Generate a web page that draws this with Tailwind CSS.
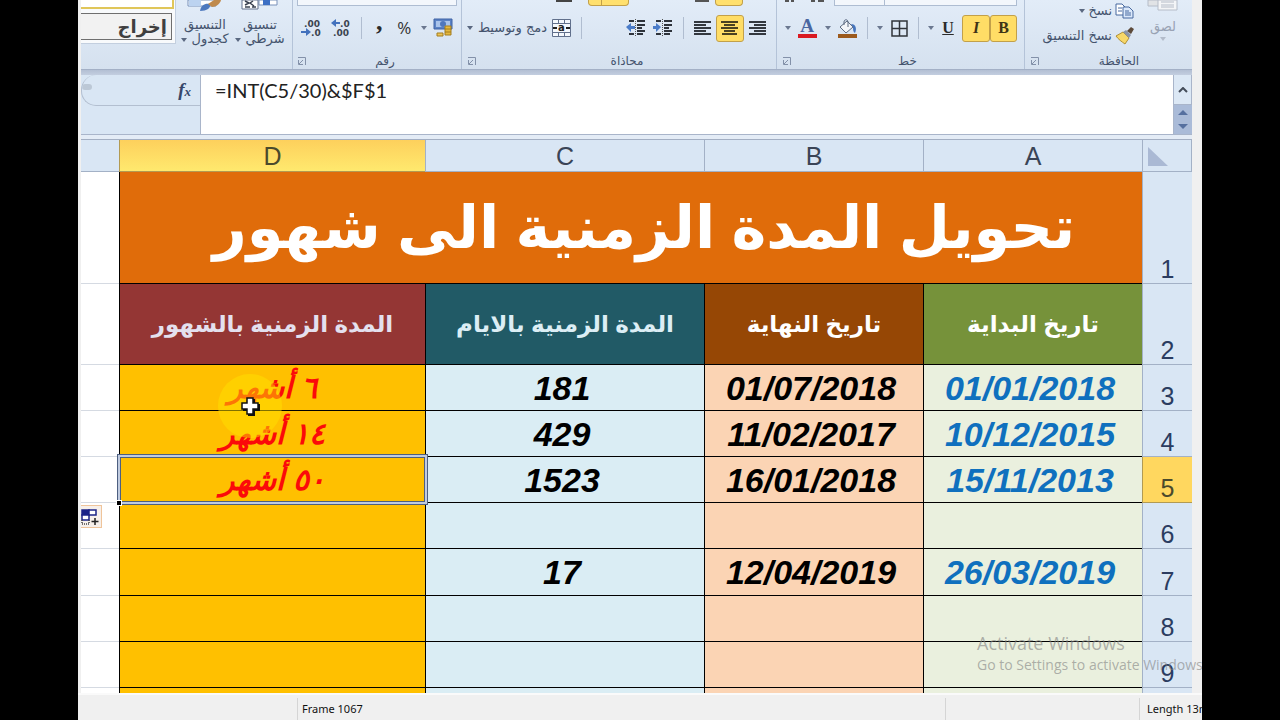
<!DOCTYPE html>
<html lang="ar">
  <head>
    <title>تحويل المدة الزمنية الى شهور</title>

    <meta charset="utf-8" />
    <meta name="viewport" content="width=device-width, initial-scale=1" />

    <script src="https://cdn.jsdelivr.net/npm/@tailwindcss/browser@4"></script>
  </head>

  <body class="bg-black">
    <div class="relative mx-[78px] flex h-screen flex-col overflow-hidden bg-[#f0f0f0] font-['Liberation_Sans','DejaVu_Sans',sans-serif]">
      <div class="ml-[3px] mr-[10px] flex min-h-0 flex-1 flex-col overflow-hidden bg-white">
        <!-- Ribbon -->
        <header class="grid h-[70px] shrink-0 grid-cols-[212fr_169fr_315fr_248fr_167fr] border-b border-[#a3b0c6] bg-linear-to-b from-[#e2ecf8] to-[#d5e1ef] font-['DejaVu_Sans',sans-serif] text-[13px] text-[#44536d]">
          <!-- Styles -->
          <section class="flex min-w-0 overflow-hidden border-r border-[#b4c3d8]" aria-label="أنماط">
            <div class="flex h-[44px] w-[95px] shrink-0 flex-col justify-between border-r border-b border-[#c3cfdf] bg-[#f8fafc] pb-[3px]">
              <button class="h-[9px] w-[93px] border-2 border-t-0 border-l-0 border-[#e0c659] bg-white" aria-label="نمط"></button>
              <button class="h-[27px] w-[91px] border border-l-0 border-[#6f6f6f] bg-[#f2f2f2] pr-1 text-right text-[18px]/[20px] font-bold text-[#3f3f3f]" dir="rtl">إخراج</button>
            </div>
            <button class="flex h-[50px] w-[58px] shrink-0 flex-col items-center leading-[14px]">
              <svg width="36" height="12" viewBox="0 0 36 12" class="mb-[6px] shrink-0">
                <path d="M1 0h28v6H1z" fill="#fff" stroke="#7891ba" />
                <path d="M2 0h12v6H2z" fill="#bcd3f0" />
                <path d="M13 11c1-6 5-8 10-7 1 4-3 7-10 7z" fill="#4d79be" />
                <path d="M21 4l6-4h7c-1 4-5 7-9 7z" fill="#c08a4c" />
              </svg>
              <span dir="rtl">التنسيق</span>
              <span dir="rtl" class="whitespace-nowrap">كجدول <i class="inline-block border-x-[3px] border-t-4 border-x-transparent border-t-[#5a6880] align-middle"></i></span>
            </button>
            <button class="flex h-[50px] w-[52px] shrink-0 flex-col items-center leading-[14px]">
              <svg width="38" height="12" viewBox="0 0 38 12" class="mb-[6px] shrink-0">
                <path d="M18 0h18v5H18z" fill="#fff" stroke="#7891ba" />
                <path d="M22 0h7v5h-7z" fill="#3c6fc4" />
                <path d="M1 0h16v9H1z" fill="#fff" stroke="#65738e" />
                <path d="M4 1l4 2-4 2M12 1l-3 2 4 3M4 7h5M11 7h4" fill="none" stroke="#3a4150" stroke-width="1.5" />
              </svg>
              <span dir="rtl">تنسيق</span>
              <span dir="rtl" class="whitespace-nowrap">شرطي <i class="inline-block border-x-[3px] border-t-4 border-x-transparent border-t-[#5a6880] align-middle"></i></span>
            </button>
          </section>

          <!-- Number -->
          <section class="flex flex-col border-r border-[#b4c3d8] px-1" aria-label="رقم">
            <div class="h-[6px] border border-t-0 border-[#aebdd2] bg-[#f3f7fc]"></div>
            <div class="mt-[7px] flex h-[30px] items-center justify-between px-1">
              <button aria-label="إنقاص المنازل العشرية">
                <svg width="20" height="18" viewBox="0 0 20 18" class="text-[9px] font-bold" fill="#3b4350">
                  <text x="3" y="8">.00</text>
                  <text x="10" y="17">.0</text>
                  <path d="M0 12h5v-3l5 4-5 4v-3H0z" fill="#4371bd" />
                </svg>
              </button>
              <button aria-label="زيادة المنازل العشرية">
                <svg width="20" height="18" viewBox="0 0 20 18" class="text-[9px] font-bold" fill="#3b4350">
                  <text x="9" y="8">.0</text>
                  <text x="2" y="17">.00</text>
                  <path d="M9 3H5V0L0 4l5 4V5h4z" fill="#4371bd" />
                </svg>
              </button>
              <span class="h-[22px] w-px bg-[#b0bdd0]"></span>
              <button class="w-4 pb-3 font-['Liberation_Serif',serif] text-[26px]/[18px] font-bold text-[#2b2b2b]" aria-label="نمط الفاصلة">,</button>
              <button class="font-['Open_Sans',sans-serif] text-[17px]/[20px] text-[#333]" aria-label="نمط النسبة المئوية">%</button>
              <div class="flex items-center gap-[6px]">
                <i class="border-x-[3px] border-t-4 border-x-transparent border-t-[#6b7890]"></i>
                <button aria-label="تنسيق أرقام المحاسبة">
                  <svg width="20" height="20" viewBox="0 0 20 20">
                    <path d="M1 1h18v10H1z" fill="#5b82c4" stroke="#3e62a5" />
                    <path d="M3 3h14v6H3z" fill="#a9c3ea" />
                    <ellipse cx="10" cy="6" rx="3" ry="3" fill="#4f77bd" />
                    <path d="M12 8h6v9h-6z" fill="#e6b93d" stroke="#a37d1e" />
                    <path d="M12 11h6M12 14h6M4 15h6v3H4z" fill="#edc556" stroke="#a37d1e" />
                  </svg>
                </button>
              </div>
            </div>
            <div class="mt-auto flex h-[17px] items-center text-[12px]">
              <button class="w-4" aria-label="إعدادات الرقم">
                <svg width="10" height="10" viewBox="0 0 10 10" fill="none" stroke="#8391a9"><path d="M1 1.500h7.500V9M6 4L2 8M1.500 4v4.500H6" /></svg>
              </button>
              <span class="flex-1 text-center" dir="rtl">رقم</span>
            </div>
          </section>

          <!-- Alignment -->
          <section class="flex flex-col border-r border-[#b4c3d8] px-[5px]" aria-label="محاذاة">
            <div class="flex h-[6px] items-start justify-end">
              <svg width="16" height="3" class="mr-[16px]"><path d="M0 1h16" stroke="#444" stroke-width="2" /></svg>
              <div class="mr-[66px] flex"><span class="h-[6px] w-[14px] rounded-bl-sm border border-t-0 border-[#c2a04a] bg-[#ffe06e]"></span><span class="h-[6px] w-[27px] rounded-br-sm border border-t-0 border-l-0 border-[#c2a04a] bg-[#ffe06e]"></span></div>
              <svg width="15" height="3" class="mr-[5px]"><path d="M0 1h14" stroke="#555" stroke-width="2" /></svg>
              <span class="mr-[28px] h-[6px] w-[28px] rounded-b-sm border border-t-0 border-[#c2a04a] bg-[#ffe06e]"></span>
            </div>
            <div class="mt-[7px] flex h-[30px] items-center justify-between pr-[5px]">
              <button class="flex items-center gap-[5px] whitespace-nowrap">
                <i class="border-x-[3px] border-t-4 border-x-transparent border-t-[#5a6880]"></i>
                <span dir="rtl">دمج وتوسيط</span>
                <svg width="19" height="18" viewBox="0 0 19 18">
                  <path d="M.5.5h18v17H.5z" fill="#f4f8fd" stroke="#61708c" />
                  <path d="M0 4.500h19M0 13.500h19M6.500 0v4M12.500 0v4M6.500 14v4M12.500 14v4" stroke="#61708c" />
                  <text x="6" y="12" class="text-[10px] font-bold" fill="#222">a</text>
                  <path d="M1 9h4M14 9h4" stroke="#222" stroke-width="2" />
                </svg>
              </button>
              <span class="h-[22px] w-px bg-[#b0bdd0]"></span>
              <span class="w-6"></span>
              <div class="flex gap-[7px]">
                <button aria-label="زيادة المسافة البادئة">
                  <svg width="20" height="18" viewBox="0 0 20 18" fill="none">
                    <path d="M3 2h5M11 2h8M11 6h8M11 9h5M11 12h8M3 15h5M11 15h6" stroke="#2e333b" stroke-width="2" />
                    <path d="M9.500 0v18" stroke="#555" stroke-dasharray="1 1" />
                    <path d="M0 8l5-4v3h4v3H5v3z" fill="#4a7cc9" />
                  </svg>
                </button>
                <button aria-label="إنقاص المسافة البادئة">
                  <svg width="20" height="18" viewBox="0 0 20 18" fill="none">
                    <path d="M3 2h5M11 2h8M11 6h8M11 9h5M11 12h8M3 15h5M11 15h6" stroke="#2e333b" stroke-width="2" />
                    <path d="M9.500 0v18" stroke="#555" stroke-dasharray="1 1" />
                    <path d="M8 8L3 4v3H0v3h3v3z" fill="#4a7cc9" />
                  </svg>
                </button>
              </div>
              <span class="h-[22px] w-px bg-[#b0bdd0]"></span>
              <div class="flex items-center gap-[5px]">
                <button aria-label="محاذاة النص إلى اليسار">
                  <svg width="17" height="15" viewBox="0 0 17 15" stroke="#33383f" stroke-width="2"><path d="M0 1h17M0 4h12M0 7h17M0 10h12M0 13h17" /></svg>
                </button>
                <button class="flex h-[27px] w-[28px] items-center justify-center rounded-[3px] border border-[#c2a04a] bg-[#ffdd66]" aria-label="توسيط">
                  <svg width="17" height="15" viewBox="0 0 17 15" stroke="#4a4122" stroke-width="2"><path d="M0 1h17M3 4h11M0 7h17M3 10h11M1 13h15" /></svg>
                </button>
                <button aria-label="محاذاة النص إلى اليمين">
                  <svg width="17" height="15" viewBox="0 0 17 15" stroke="#33383f" stroke-width="2"><path d="M0 1h17M5 4h12M0 7h17M5 10h12M0 13h17" /></svg>
                </button>
              </div>
            </div>
            <div class="mt-auto flex h-[17px] items-center text-[12px]">
              <button class="w-4" aria-label="إعدادات المحاذاة">
                <svg width="10" height="10" viewBox="0 0 10 10" fill="none" stroke="#8391a9"><path d="M1 1.500h7.500V9M6 4L2 8M1.500 4v4.500H6" /></svg>
              </button>
              <span class="flex-1 text-center" dir="rtl">محاذاة</span>
            </div>
          </section>

          <!-- Font -->
          <section class="flex flex-col border-r border-[#b4c3d8] pr-[7px] pl-[5px]" aria-label="خط">
            <div class="flex h-[6px] items-start justify-end">
              <svg width="42" height="3" class="mr-[9px]"><path d="M2 1h4M8 1h3M28 1h4M35 1h6" stroke="#555" stroke-width="2" /></svg>
              <div class="h-[6px] w-[51px] border border-t-0 border-[#aebdd2] bg-[#f3f7fc]"></div>
              <div class="h-[6px] w-[132px] border border-t-0 border-l-0 border-[#aebdd2] bg-[#f3f7fc]"></div>
            </div>
            <div class="mt-[7px] flex h-[30px] items-center justify-between pl-[3px]">
              <div class="flex items-center gap-[6px]">
                <i class="border-x-[3px] border-t-4 border-x-transparent border-t-[#6b7890]"></i>
                <button class="flex w-5 flex-col items-center" aria-label="لون الخط">
                  <span class="font-['Liberation_Serif',serif] text-[19px]/[14px] font-bold text-[#4a66a0]">A</span>
                  <span class="mt-px h-[4px] w-[19px] bg-[#da1a22]"></span>
                </button>
                <i class="ml-[2px] border-x-[3px] border-t-4 border-x-transparent border-t-[#6b7890]"></i>
                <button class="flex w-5 flex-col items-center" aria-label="لون التعبئة">
                  <svg width="20" height="15" viewBox="0 0 20 15">
                    <path d="M3 8l7-6 6 6-7 6z" fill="#f3f5f9" stroke="#5d6a80" />
                    <path d="M7 6V3c0-3 4-3 4 0v5" fill="none" stroke="#5d6a80" />
                    <path d="M14 5c5 0 6 5 4 9-2-1-2-4-2-6z" fill="#4675bd" />
                  </svg>
                  <span class="h-[4px] w-[19px] bg-[#9c5a1d]"></span>
                </button>
              </div>
              <span class="h-[22px] w-px bg-[#b0bdd0]"></span>
              <div class="flex items-center gap-2">
                <i class="border-x-[3px] border-t-4 border-x-transparent border-t-[#6b7890]"></i>
                <button aria-label="حدود">
                  <svg width="17" height="17" viewBox="0 0 17 17" fill="none" stroke="#30343a" stroke-width="1.500"><path d="M1 1h15v15H1zM8.500 1v15M1 8.500h15" /></svg>
                </button>
              </div>
              <span class="h-[22px] w-px bg-[#b0bdd0]"></span>
              <div class="flex items-center gap-[6px] font-['Liberation_Serif',serif] text-[16px] font-bold text-[#2b2b2b]">
                <i class="border-x-[3px] border-t-4 border-x-transparent border-t-[#6b7890]"></i>
                <button class="w-[16px] underline" aria-label="تسطير">U</button>
                <div class="flex text-[#3e3416]">
                  <button class="h-[27px] w-[28px] rounded-[3px] border border-[#c2a04a] bg-[#ffdd66] italic" aria-label="مائل">I</button>
                  <button class="h-[27px] w-[27px] rounded-[3px] border border-[#c2a04a] bg-[#ffdd66]" aria-label="غامق">B</button>
                </div>
              </div>
            </div>
            <div class="mt-auto flex h-[17px] items-center text-[12px]">
              <button class="w-4" aria-label="إعدادات الخط">
                <svg width="10" height="10" viewBox="0 0 10 10" fill="none" stroke="#8391a9"><path d="M1 1.500h7.500V9M6 4L2 8M1.500 4v4.500H6" /></svg>
              </button>
              <span class="flex-1 text-center" dir="rtl">خط</span>
            </div>
          </section>

          <!-- Clipboard -->
          <section class="flex flex-col pl-[5px]" aria-label="الحافظة">
            <div class="flex justify-end">
              <div class="flex flex-col items-end">
                <button class="flex h-[21px] items-center gap-[3px]">
                  <i class="border-x-[3px] border-t-4 border-x-transparent border-t-[#5a6880]"></i>
                  <span dir="rtl">نسخ</span>
                  <svg width="19" height="16" viewBox="0 0 19 16" fill="#fff" stroke="#47689f">
                    <path d="M1 1h6l3 3v8H1z" />
                    <path d="M3 5h4M3 8h4" />
                    <path d="M8 4h6l4 4v7H8z" fill="#dbe8fa" />
                    <path d="M10 8h4M10 10h6M10 12h6" />
                  </svg>
                </button>
                <button class="flex h-[30px] items-center gap-[3px] whitespace-nowrap">
                  <span dir="rtl">نسخ التنسيق</span>
                  <svg width="19" height="18" viewBox="0 0 19 18">
                    <path d="M1 9l7-4 6 6-4 6C7 15 3 12 1 9z" fill="#f7d768" stroke="#b08f35" />
                    <path d="M8 5l3-2 5 5-2 3z" fill="#8a94a8" />
                    <path d="M12 4l4-4 3 2-3 5z" fill="#5d4a3a" />
                  </svg>
                </button>
              </div>
              <button class="flex w-[58px] flex-col items-center text-[#98a2b3]">
                <svg width="32" height="12" viewBox="0 0 32 12" class="mb-[7px]" fill="#f4f5f7" stroke="#b5bcc8">
                  <path d="M1 0h15v6H1z" fill="#e1e3e6" />
                  <path d="M11 0h19v10H11z" />
                  <path d="M14 2h13M14 5h13M14 7h13" />
                </svg>
                <span dir="rtl" class="leading-[16px]">لصق</span>
                <i class="mt-[2px] border-x-[3px] border-t-4 border-x-transparent border-t-[#b3bccb]"></i>
              </button>
            </div>
            <div class="mt-auto flex h-[17px] items-center text-[12px]">
              <button class="w-4" aria-label="إعدادات الحافظة">
                <svg width="10" height="10" viewBox="0 0 10 10" fill="none" stroke="#8391a9"><path d="M1 1.500h7.500V9M6 4L2 8M1.500 4v4.500H6" /></svg>
              </button>
              <span class="flex-1 text-center" dir="rtl">الحافظة</span>
            </div>
          </section>
        </header>

        <div class="h-[5px] shrink-0 bg-linear-to-b from-[#b3bfd3] to-[#c3cee0]"></div>

        <!-- Formula bar -->
        <div class="flex h-[60px] shrink-0 border-b border-[#a9b5ca]">
          <div class="w-[120px] border-r border-[#a9b5ca] bg-[#d9e6f4]">
            <div class="flex h-[31px] items-center justify-between overflow-hidden rounded-l-[15px] border-b border-l border-[#b3bfd0] pr-[9px]">
              <span class="mb-[6px] h-[6px] w-[10px] rounded-full bg-[#bcc8d6]"></span>
              <button class="font-['Liberation_Serif',serif] text-[19px] font-bold text-[#37476a] italic" aria-label="إدراج دالة">f<span class="text-[13px]">x</span></button>
            </div>
          </div>
          <textarea class="flex-1 resize-none overflow-hidden bg-white px-[14px] pt-[2px] font-['Lato',sans-serif] text-[20px]/[26px] text-[#222] outline-none" aria-label="شريط الصيغة">=INT(C5/30)&amp;$F$1</textarea>
          <div class="flex w-[19px] flex-col border-l border-[#a9b5ca] bg-[#aabbd8]">
            <button class="flex h-[30px] items-center justify-center border-r border-b border-[#a9b5ca] bg-[#dce8f5]" aria-label="توسيع شريط الصيغة">
              <svg width="10" height="6" viewBox="0 0 10 6" fill="none" stroke="#444c59" stroke-width="2"><path d="M1 5l4-4 4 4" /></svg>
            </button>
            <button class="flex flex-1 items-center justify-center" aria-label="لأعلى"><i class="border-x-[5px] border-b-[5px] border-x-transparent border-b-[#56709f]"></i></button>
            <button class="flex flex-1 items-center justify-center" aria-label="لأسفل"><i class="border-x-[5px] border-t-[5px] border-x-transparent border-t-[#56709f]"></i></button>
          </div>
        </div>

        <div class="h-[5px] shrink-0 border-b border-[#a3afc3] bg-[#e4ecf6]"></div>

        <!-- Sheet -->
        <div class="min-h-0 flex-1 overflow-hidden">
          <table dir="rtl" class="w-full table-fixed border-separate border-spacing-0 text-center text-black">
            <colgroup>
              <col class="w-[50px]" />
              <col class="w-[219px]" />
              <col class="w-[219px]" />
              <col class="w-[279px]" />
              <col class="w-[306px]" />
              <col class="w-[38px]" />
            </colgroup>
            <thead class="text-[25px]/[30px] text-[#3a4456]">
              <tr class="h-[32px] bg-[#d9e6f4]">
                <td class="border-x border-b border-[#a3b1c6] p-0">
                  <svg width="22" height="22" viewBox="0 0 22 22" class="mr-auto ml-[5px]"><path d="M0 2v19h20z" fill="#aab9d4" /></svg>
                </td>
                <th scope="col" class="border-b border-l border-[#a3b1c6] p-0 font-normal">A</th>
                <th scope="col" class="border-b border-l border-[#a3b1c6] p-0 font-normal">B</th>
                <th scope="col" class="border-b border-l border-[#a3b1c6] p-0 font-normal">C</th>
                <th scope="col" class="border-b border-l border-[#b29a52] bg-linear-to-b from-[#fdd05c] to-[#ffe96e] p-0 font-normal text-[#4b4a2c]">D</th>
                <td class="border-b border-[#a3b1c6] p-0"></td>
              </tr>
            </thead>
            <tbody class="text-[34px]/[36px] font-bold italic">
              <tr class="h-[112px]">
                <th scope="row" class="border-b border-l border-[#a3b1c6] bg-[#d9e6f4] p-0 align-bottom text-[25px]/[28px] font-normal text-[#2b3c60] not-italic">1</th>
                <td colspan="4" class="border-b border-l border-black bg-[#e06c0a] py-0 pr-0 pl-[26px] text-[59px]/[80px] text-white not-italic">تحويل المدة الزمنية الى شهور</td>
                <td class="border-b border-[#d5dae2] p-0"></td>
              </tr>
              <tr class="h-[81px] text-[23px]/[36px] text-white not-italic">
                <th scope="row" class="border-b border-l border-[#a3b1c6] bg-[#d9e6f4] p-0 align-bottom text-[25px]/[28px] font-normal text-[#2b3c60]">2</th>
                <td class="border-b border-l border-black bg-[#76923a] p-0">تاريخ البداية</td>
                <td class="border-b border-l border-black bg-[#964705] p-0">تاريخ النهاية</td>
                <td class="border-b border-l border-black bg-[#215a66] p-0 text-[#dceef5]">المدة الزمنية بالايام</td>
                <td class="border-b border-l border-black bg-[#943634] p-0 text-[#e4e0ee]">المدة الزمنية بالشهور</td>
                <td class="border-b border-[#d5dae2] p-0"></td>
              </tr>
              <tr class="h-[46px]">
                <th scope="row" class="border-b border-l border-[#a3b1c6] bg-[#d9e6f4] p-0 align-bottom text-[25px]/[28px] font-normal text-[#2b3c60] not-italic">3</th>
                <td class="border-b border-l border-black bg-[#eaf0de] py-0 pr-[6px] pl-0 text-[#0f70be]"><bdi>01/01/2018</bdi></td>
                <td class="border-b border-l border-black bg-[#fbd4b4] py-0 pr-[6px] pl-0"><bdi>01/07/2018</bdi></td>
                <td class="border-b border-l border-black bg-[#daedf4] py-0 pr-[6px] pl-0">181</td>
                <td class="relative border-b border-l border-black bg-[#ffc000] p-0 text-[30px]/[36px] text-[#fb0a0a]">
                  ٦ أشهر
                  <!-- Mouse pointer -->
                  <div class="absolute top-[9px] left-[98px] z-10 flex h-[64px] w-[64px] items-center justify-center rounded-full bg-[#ffe000]/50">
                    <svg width="20" height="20" viewBox="0 0 20 20">
                      <path d="M8 3h7v5h5v7h-5v5H8v-5H3V8h5z" fill="#111" />
                      <path d="M7 2h6v5h5v6h-5v5H7v-5H2V7h5z" fill="#fff" stroke="#111" stroke-width="1.500" />
                    </svg>
                  </div>
                </td>
                <td class="border-b border-[#d5dae2] p-0"></td>
              </tr>
              <tr class="h-[46px]">
                <th scope="row" class="border-b border-l border-[#a3b1c6] bg-[#d9e6f4] p-0 align-bottom text-[25px]/[28px] font-normal text-[#2b3c60] not-italic">4</th>
                <td class="border-b border-l border-black bg-[#eaf0de] py-0 pr-[6px] pl-0 text-[#0f70be]"><bdi>10/12/2015</bdi></td>
                <td class="border-b border-l border-black bg-[#fbd4b4] py-0 pr-[6px] pl-0"><bdi>11/02/2017</bdi></td>
                <td class="border-b border-l border-black bg-[#daedf4] py-0 pr-[6px] pl-0">429</td>
                <td class="border-b border-l border-black bg-[#ffc000] p-0 text-[30px]/[36px] text-[#fb0a0a]">١٤ أشهر</td>
                <td class="border-b border-[#d5dae2] p-0"></td>
              </tr>
              <tr class="h-[46px]">
                <th scope="row" class="border-b border-l border-[#b29a52] bg-[#ffd75f] p-0 align-bottom text-[25px]/[28px] font-normal text-[#4b4a2c] not-italic">5</th>
                <td class="border-b border-l border-black bg-[#eaf0de] py-0 pr-[6px] pl-0 text-[#0f70be]"><bdi>15/11/2013</bdi></td>
                <td class="border-b border-l border-black bg-[#fbd4b4] py-0 pr-[6px] pl-0"><bdi>16/01/2018</bdi></td>
                <td class="border-b border-l border-black bg-[#daedf4] py-0 pr-[6px] pl-0">1523</td>
                <td class="relative border-b border-l border-black bg-[#ffc000] p-0 text-[30px]/[36px] text-[#fb0a0a]">
                  ٥٠ أشهر
                  <!-- Selected cell -->
                  <div class="absolute -inset-[3px] z-10 border border-[#4d5f80]"><div class="h-full border-2 border-[#c0cbdf]"><div class="h-full border border-[#4d5f80]"></div></div></div>
                  <div class="absolute -bottom-[4px] -left-[4px] z-10 size-[6px] border border-white bg-black"></div>
                </td>
                <td class="relative border-b border-[#d5dae2] p-0">
                  <button class="absolute top-[48px] left-0 h-[23px] w-[21px] border border-l-0 border-[#efc49a] bg-[#f6efea]" aria-label="خيارات التعبئة التلقائية">
                    <svg width="20" height="20" viewBox="0 0 20 20" fill="#fff" stroke="#1c2488" stroke-width="1.500">
                      <path d="M1 3h7v5H1z" fill="#1c2488" />
                      <path d="M8 3h7v5H8zM1 8h7v5H1z" />
                      <path d="M1 13v4h7v-4" fill="none" stroke="#444" stroke-dasharray="1 1" />
                      <path d="M14 11v7M10.500 14.500h7" stroke="#222" />
                    </svg>
                  </button>
                </td>
              </tr>
              <tr class="h-[46px]">
                <th scope="row" class="border-b border-l border-[#a3b1c6] bg-[#d9e6f4] p-0 align-bottom text-[25px]/[28px] font-normal text-[#2b3c60] not-italic">6</th>
                <td class="border-b border-l border-black bg-[#eaf0de] p-0"></td>
                <td class="border-b border-l border-black bg-[#fbd4b4] p-0"></td>
                <td class="border-b border-l border-black bg-[#daedf4] p-0"></td>
                <td class="border-b border-l border-black bg-[#ffc000] p-0"></td>
                <td class="border-b border-[#d5dae2] p-0"></td>
              </tr>
              <tr class="h-[47px]">
                <th scope="row" class="border-b border-l border-[#a3b1c6] bg-[#d9e6f4] p-0 align-bottom text-[25px]/[28px] font-normal text-[#2b3c60] not-italic">7</th>
                <td class="border-b border-l border-black bg-[#eaf0de] py-0 pr-[6px] pl-0 text-[#0f70be]"><bdi>26/03/2019</bdi></td>
                <td class="border-b border-l border-black bg-[#fbd4b4] py-0 pr-[6px] pl-0"><bdi>12/04/2019</bdi></td>
                <td class="border-b border-l border-black bg-[#daedf4] py-0 pr-[6px] pl-0">17</td>
                <td class="border-b border-l border-black bg-[#ffc000] p-0"></td>
                <td class="border-b border-[#d5dae2] p-0"></td>
              </tr>
              <tr class="h-[46px]">
                <th scope="row" class="border-b border-l border-[#a3b1c6] bg-[#d9e6f4] p-0 align-bottom text-[25px]/[28px] font-normal text-[#2b3c60] not-italic">8</th>
                <td class="border-b border-l border-black bg-[#eaf0de] p-0"></td>
                <td class="border-b border-l border-black bg-[#fbd4b4] p-0"></td>
                <td class="border-b border-l border-black bg-[#daedf4] p-0"></td>
                <td class="border-b border-l border-black bg-[#ffc000] p-0"></td>
                <td class="border-b border-[#d5dae2] p-0"></td>
              </tr>
              <tr class="h-[46px]">
                <th scope="row" class="border-b border-l border-[#a3b1c6] bg-[#d9e6f4] p-0 align-bottom text-[25px]/[28px] font-normal text-[#2b3c60] not-italic">9</th>
                <td class="border-b border-l border-black bg-[#eaf0de] p-0"></td>
                <td class="border-b border-l border-black bg-[#fbd4b4] p-0"></td>
                <td class="border-b border-l border-black bg-[#daedf4] p-0"></td>
                <td class="border-b border-l border-black bg-[#ffc000] p-0"></td>
                <td class="border-b border-[#d5dae2] p-0"></td>
              </tr>
              <tr class="h-[46px]">
                <td class="border-l border-[#a3b1c6] bg-[#d9e6f4] p-0"></td>
                <td class="border-l border-black bg-[#eaf0de] p-0"></td>
                <td class="border-l border-black bg-[#fbd4b4] p-0"></td>
                <td class="border-l border-black bg-[#daedf4] p-0"></td>
                <td class="border-l border-black bg-[#ffc000] p-0"></td>
                <td class="p-0"></td>
              </tr>
            </tbody>
          </table>
        </div>
      </div>

      <!-- Status bar -->
      <footer class="flex h-[27px] shrink-0 items-stretch border-t-2 border-[#fafafa] pt-[3px] font-['Noto_Sans',sans-serif] text-[11px]/[22px] text-[#111]">
        <span class="w-[219px]"></span>
        <span class="flex-1 border-l border-[#d5d5d5] pl-1">Frame 1067</span>
        <span class="w-[194px] border-l border-[#d5d5d5]"></span>
        <span class="w-[63px] overflow-hidden border-l border-[#d5d5d5] pl-[7px] whitespace-nowrap">Length 13m</span>
      </footer>

      <!-- Windows watermark -->
      <div class="pointer-events-none absolute right-0 bottom-[45px] z-20 w-[225px] font-['Open_Sans',sans-serif] whitespace-nowrap text-[#808080]/60">
        <p class="text-[18px]/[24px]">Activate Windows</p>
        <p class="text-[14px]/[20px]">Go to Settings to activate Windows</p>
      </div>
    </div>
  </body>
</html>
